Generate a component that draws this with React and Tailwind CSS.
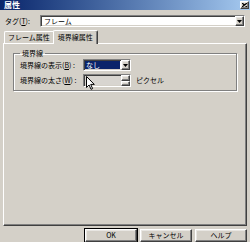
import React from "react";

const font = "font-['Noto_Sans_CJK_JP','Noto_Sans',sans-serif]";

const raised =
  "border border-t-white border-l-white border-r-[#404040] border-b-[#404040] shadow-[inset_-1px_-1px_#808080,inset_1px_1px_#e8e6e2]";
const sunken =
  "border border-t-[#808080] border-l-[#808080] border-r-white border-b-white shadow-[inset_1px_1px_#404040,inset_-1px_-1px_#d4d0c8]";

const Arrow = () => (
  <svg width="5" height="3" viewBox="0 0 5 3">
    <path d="M0 0h5L2.5 3z" fill="#000" />
  </svg>
);

const DropButton = () => (
  <div className={`w-[9px] h-full flex items-center justify-center bg-[#d4d0c8] ${raised}`}>
    <Arrow />
  </div>
);

const Cursor = () => (
  <svg width="9" height="14" viewBox="0 0 9 14" className="absolute left-[2px] top-[1px]">
    <path d="M0.5 0.5v11l2.6-2.5 1.9 4.3 1.6-.7-1.9-4.2h3.6z" fill="#fff" stroke="#000" strokeWidth="1" />
  </svg>
);

const Button = ({ children, main }) => (
  <button
    className={`w-[52px] h-[13px] flex items-center justify-center text-[7px] leading-none text-black bg-[#d4d0c8] ${
      main ? "outline outline-1 outline-black" : ""
    } ${raised}`}
  >
    {children}
  </button>
);

export default function App() {
  return (
    <div className={`w-[250px] h-[242px] bg-[#d4d0c8] flex flex-col overflow-hidden text-black ${font}`}>
      {/* title bar */}
      <div className="h-[10px] flex items-center justify-between pl-[4px] pr-[1px] bg-gradient-to-r from-[#0a246a] to-[#a6caf0]">
        <span className="text-white font-bold text-[8px] leading-none">属性</span>
        <div className={`w-[9px] h-[8px] flex items-center justify-center bg-[#d4d0c8] ${raised}`}>
          <svg width="5" height="4" viewBox="0 0 5 4">
            <path d="M0 0l5 4M5 0L0 4" stroke="#000" strokeWidth="1.2" />
          </svg>
        </div>
      </div>

      {/* tag row */}
      <div className="flex items-center mt-[5px] pl-[5px] pr-[5px] h-[12px]">
        <span className="text-[7px] leading-none">
          タグ(<span className="underline">T</span>):
        </span>
        <div className={`ml-auto w-[205px] h-[12px] flex items-center bg-white ${sunken}`}>
          <span className="flex-1 pl-[3px] text-[7px] leading-none">フレーム</span>
          <DropButton />
        </div>
      </div>

      {/* tabs */}
      <div className="flex items-end mt-[2px] pl-[4px] h-[14px] relative z-10">
        <div className="h-[12px] px-[3px] flex items-center text-[7px] leading-none border-t border-l border-t-white border-l-white rounded-tl-[2px]">
          フレーム属性
        </div>
        <div className="h-[14px] -mb-[1px] px-[4px] flex items-center text-[7px] leading-none bg-[#d4d0c8] border-t border-l border-r border-t-white border-l-white border-r-[#404040] rounded-t-[2px] shadow-[inset_-1px_0_#808080]">
          境界線属性
        </div>
      </div>

      {/* panel */}
      <div className="mx-[3px] h-[183px] border border-t-white border-l-white border-r-[#404040] border-b-[#404040] shadow-[inset_-1px_-1px_#808080] pt-[6px] px-[9px]">
        <fieldset className="h-[41px] border border-[#808080] shadow-[1px_1px_white,inset_1px_1px_white] px-[6px]">
          <legend className="px-[2px] text-[7px] leading-none">境界線</legend>
          <div className="flex items-center h-[12px] mt-[2px]">
            <span className="w-[63px] text-[7px] leading-none">
              境界線の表示(<span className="underline">B</span>) :
            </span>
            <div className={`w-[48px] h-[12px] flex items-center bg-white ${sunken}`}>
              <div className="flex-1 h-[8px] ml-[1px] mr-[1px] bg-[#0a246a] text-white text-[7px] leading-[8px] pl-[1px]">
                なし
              </div>
              <DropButton />
            </div>
          </div>
          <div className="flex items-center h-[13px] mt-[3px]">
            <span className="w-[63px] text-[7px] leading-none">
              境界線の太さ(<span className="underline">W</span>) :
            </span>
            <div className={`relative w-[48px] h-[13px] flex bg-[#d8d5d0] ${sunken}`}>
              <Cursor />
              <div className="ml-auto w-[9px] h-full flex flex-col">
                <div className={`flex-1 bg-[#d4d0c8] ${raised}`} />
                <div className={`flex-1 bg-[#d4d0c8] ${raised}`} />
              </div>
            </div>
            <span className="ml-[5px] text-[7px] leading-none">ピクセル</span>
          </div>
        </fieldset>
      </div>

      {/* buttons */}
      <div className="flex justify-end gap-[3px] mt-[3px] pr-[3px]">
        <Button main>OK</Button>
        <Button>キャンセル</Button>
        <Button>ヘルプ</Button>
      </div>
    </div>
  );
}
